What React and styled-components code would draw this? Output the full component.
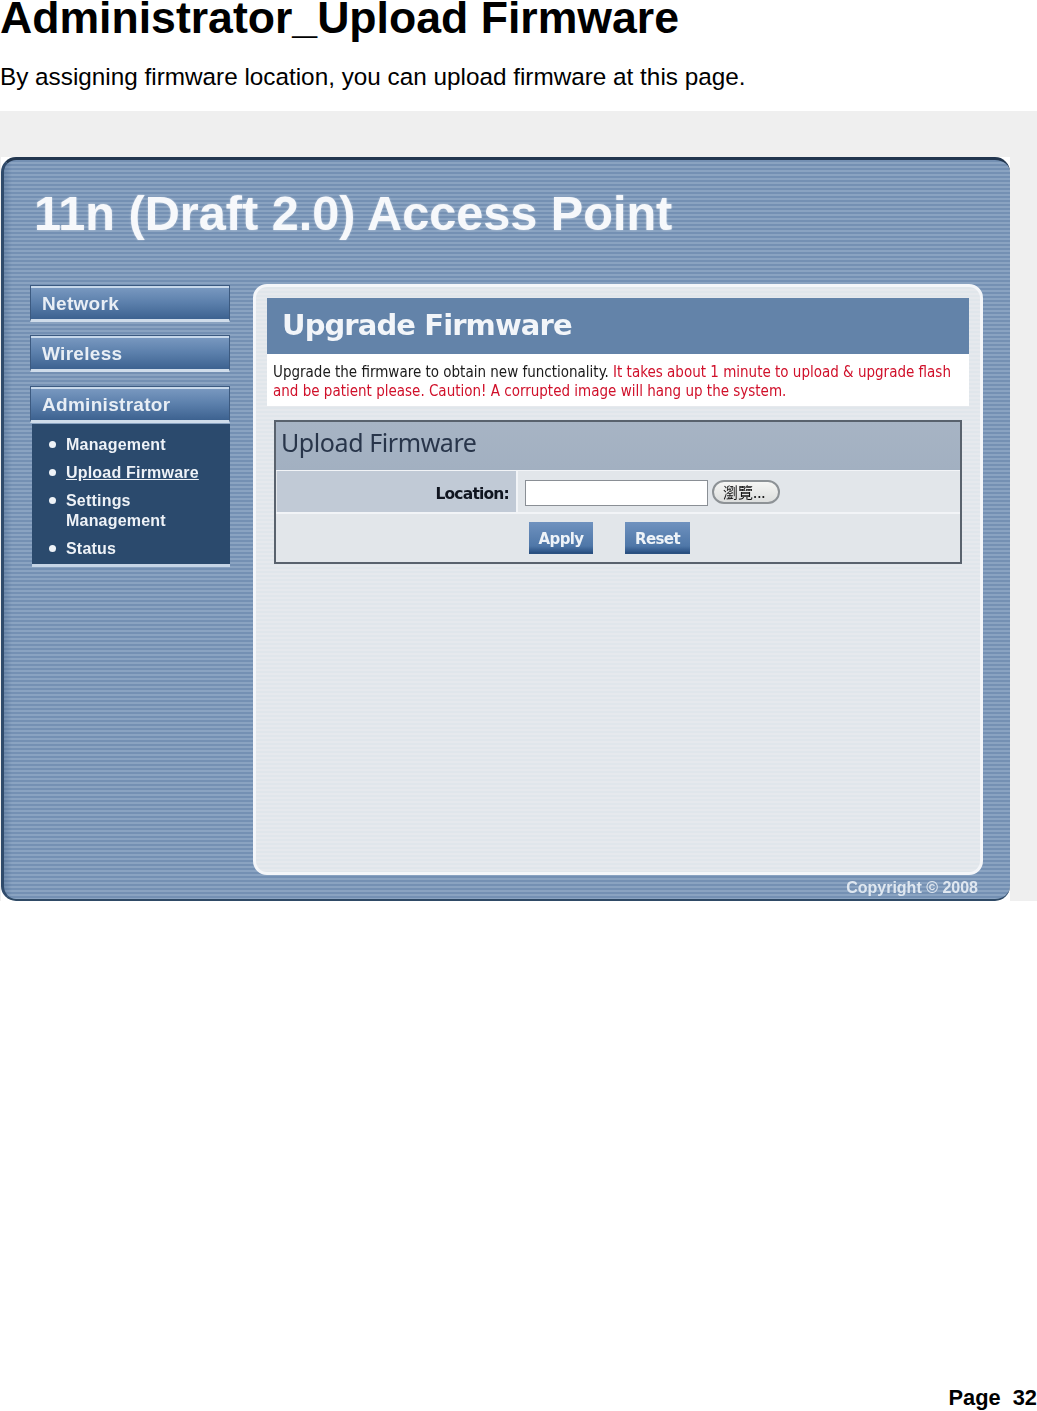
import React from "react";
import styled, { createGlobalStyle } from "styled-components";

const Global = createGlobalStyle`
  html, body { margin: 0; padding: 0; background: #fff; }
  body { font-family: "Liberation Sans", Arial, sans-serif; color: #000; }
`;

const Page = styled.div`
  width: 1037px;
  height: 1411px;
  display: flex;
  flex-direction: column;
  overflow: hidden;
`;
const Heading = styled.h1`
  margin: 0;
  height: 40px;
  font: bold 44.6px/36px "Liberation Sans", sans-serif;
  white-space: nowrap;
`;
const Lead = styled.p`
  margin: 19px 0 0;
  height: 52px;
  font: 24.3px/36px "Liberation Sans", sans-serif;
  white-space: nowrap;
`;
const Band = styled.div`
  height: 790px;
  background: #efefef;
  padding: 46px 27px 0 1px;
  box-sizing: border-box;
`;
const Frame = styled.div`
  background: #fff;
  height: 744px;
`;
const Win = styled.div`
  height: 744px;
  box-sizing: border-box;
  border-top: 3px solid #22364f;
  border-bottom: 2px solid #2f4a66;
  border-left: 3px solid #2f4a6b;
  border-radius: 15px;
  background:
    linear-gradient(90deg, rgba(60, 90, 130, .3), rgba(60, 90, 130, 0) 8px),
    repeating-linear-gradient(180deg, #7490b3 0 2px, #8aa3c1 2px 4px);
  display: flex;
  flex-direction: column;
  overflow: hidden;
  filter: blur(0.35px);
`;
const Brand = styled.div`
  flex: none;
  height: 124px;
  box-sizing: border-box;
  padding: 30px 0 0 30px;
  font: bold 48.6px/46px "Liberation Sans", sans-serif;
  color: #f6f8fb;
  white-space: nowrap;
  text-shadow: 0 0 2px rgba(255, 255, 255, .5);
`;
const Columns = styled.div`
  flex: none;
  display: grid;
  grid-template-columns: 200px 730px;
  gap: 23px;
  padding-left: 26px;
  height: 591px;
`;
const Side = styled.nav`
  display: flex;
  flex-direction: column;
`;
const NavButton = styled.div`
  height: 37px;
  box-sizing: border-box;
  margin: ${(p) => p.$top}px 0 0;
  padding: 3px 0 0 11px;
  border: 1px solid #3c5a80;
  border-bottom: 3px solid #cfdcea;
  box-shadow: inset 0 2px 0 #c7d8ea;
  background: linear-gradient(180deg, #7c9bc2 0%, #5c80ac 50%, #3d6290 100%);
  color: #e8eef5;
  font: bold 19px/29px "Liberation Sans", sans-serif;
  letter-spacing: .3px;
`;
const SubMenu = styled.ul`
  list-style: none;
  margin: 1px 0 0 2px;
  padding: 11px 0 5px 34px;
  background: #2b4a6d;
  border-bottom: 3px solid #c6d5e6;
  display: flex;
  flex-direction: column;
  gap: 8px;
`;
const SubItem = styled.li`
  position: relative;
  font: bold 16px/20px "Liberation Sans", sans-serif;
  letter-spacing: .2px;
  color: #eef2f7;
  text-decoration: ${(p) => (p.$active ? "underline" : "none")};
  &::before {
    content: "";
    position: absolute;
    left: -17px;
    top: 6px;
    width: 7px;
    height: 7px;
    border-radius: 50%;
    background: #eef2f7;
  }
`;
const Panel = styled.main`
  box-sizing: border-box;
  height: 591px;
  border: 3px solid #f4f6f9;
  border-radius: 14px;
  padding: 11px;
  background: repeating-linear-gradient(180deg, #e0e6eb 0 2px, #e6e9ed 2px 4px);
`;
const Banner = styled.div`
  height: 56px;
  box-sizing: border-box;
  padding-left: 15px;
  background: #6383a9;
  color: #f2f5f9;
  font: bold 29px/55px "DejaVu Sans", sans-serif;
  letter-spacing: -.9px;
  white-space: nowrap;
`;
const Intro = styled.div`
  height: 52px;
  box-sizing: border-box;
  padding: 9px 0 0 6px;
  background: #fff;
  font: 15px/19px "DejaVu Sans Condensed", "DejaVu Sans", sans-serif;
  color: #1a1a1a;
  white-space: nowrap;
`;
const Warn = styled.span`
  color: #d0102a;
`;
const FormBox = styled.section`
  margin: 14px 7px 0;
  height: 144px;
  box-sizing: border-box;
  border: 2px solid #59626d;
  background: #e2e6ea;
`;
const FormHead = styled.div`
  height: 49px;
  box-sizing: border-box;
  padding-left: 5px;
  background: linear-gradient(180deg, #a7b4c4, #a2b0c1);
  color: #28354a;
  font: 25px/40px "Noto Sans", sans-serif;
  letter-spacing: -.42px;
  border-bottom: 1px solid #f2f4f7;
`;
const Row = styled.div`
  display: flex;
  height: 43px;
  padding-left: 1px;
  box-sizing: border-box;
  border-bottom: 2px solid #f2f4f7;
`;
const LabelCell = styled.div`
  width: 241px;
  height: 41px;
  box-sizing: border-box;
  padding-right: 7px;
  text-align: right;
  background: #c1cad6;
  font: bold 15.5px/46px "DejaVu Sans", sans-serif;
  letter-spacing: -.8px;
  color: #101520;
  border-right: 2px solid #f2f4f7;
`;
const ValueCell = styled.div`
  display: flex;
  gap: 4px;
  align-items: flex-start;
  padding: 9px 0 0 7px;
`;
const Field = styled.div`
  width: 183px;
  height: 26px;
  box-sizing: border-box;
  background: #fff;
  border: 1px solid #8a8f95;
`;
const Browse = styled.div`
  width: 68px;
  height: 24px;
  box-sizing: border-box;
  border: 2px solid #8d9296;
  border-radius: 12px;
  background: linear-gradient(180deg, #f6f6f4, #dcdedd);
  padding-left: 9px;
  font: 15px/20px "Noto Sans CJK TC", "Noto Sans", sans-serif;
  color: #111;
  white-space: nowrap;
`;
const Actions = styled.div`
  display: flex;
  gap: 32px;
  padding: 8px 0 0 253px;
`;
const ActionButton = styled.div`
  width: ${(p) => p.$w}px;
  height: 32px;
  box-sizing: border-box;
  text-align: center;
  background: linear-gradient(180deg, #6f92bf, #4f77a8 80%, #2d5487);
  border-bottom: 2px solid #2a5080;
  color: #eef3f8;
  font: bold 15px/34px "DejaVu Sans", sans-serif;
  letter-spacing: -.6px;
`;
const Foot = styled.div`
  flex: 1;
  min-height: 0;
  box-sizing: border-box;
  padding-right: 32px;
  text-align: right;
  color: #dfe7f0;
  font: bold 16px/26px "Liberation Sans", sans-serif;
`;
const PageNo = styled.div`
  margin-top: auto;
  text-align: right;
  font: bold 21.8px/26px "Liberation Sans", sans-serif;
  white-space: pre;
`;

export default function App() {
  return (
    <Page>
      <Global />
      <Heading>Administrator_Upload Firmware</Heading>
      <Lead>By assigning firmware location, you can upload firmware at this page.</Lead>
      <Band>
        <Frame>
          <Win>
            <Brand>11n (Draft 2.0) Access Point</Brand>
            <Columns>
              <Side>
                <NavButton $top={1}>Network</NavButton>
                <NavButton $top={13}>Wireless</NavButton>
                <NavButton $top={14}>Administrator</NavButton>
                <SubMenu>
                  <SubItem>Management</SubItem>
                  <SubItem $active>Upload Firmware</SubItem>
                  <SubItem>Settings<br />Management</SubItem>
                  <SubItem>Status</SubItem>
                </SubMenu>
              </Side>
              <Panel>
                <Banner>Upgrade Firmware</Banner>
                <Intro>
                  Upgrade the firmware to obtain new functionality. <Warn>It takes about 1 minute to upload &amp; upgrade flash</Warn>
                  <br />
                  <Warn>and be patient please. Caution! A corrupted image will hang up the system.</Warn>
                </Intro>
                <FormBox>
                  <FormHead>Upload Firmware</FormHead>
                  <Row>
                    <LabelCell>Location:</LabelCell>
                    <ValueCell>
                      <Field />
                      <Browse>瀏覽...</Browse>
                    </ValueCell>
                  </Row>
                  <Actions>
                    <ActionButton $w={64}>Apply</ActionButton>
                    <ActionButton $w={65}>Reset</ActionButton>
                  </Actions>
                </FormBox>
              </Panel>
            </Columns>
            <Foot>Copyright © 2008</Foot>
          </Win>
        </Frame>
      </Band>
      <PageNo>Page  32</PageNo>
    </Page>
  );
}
